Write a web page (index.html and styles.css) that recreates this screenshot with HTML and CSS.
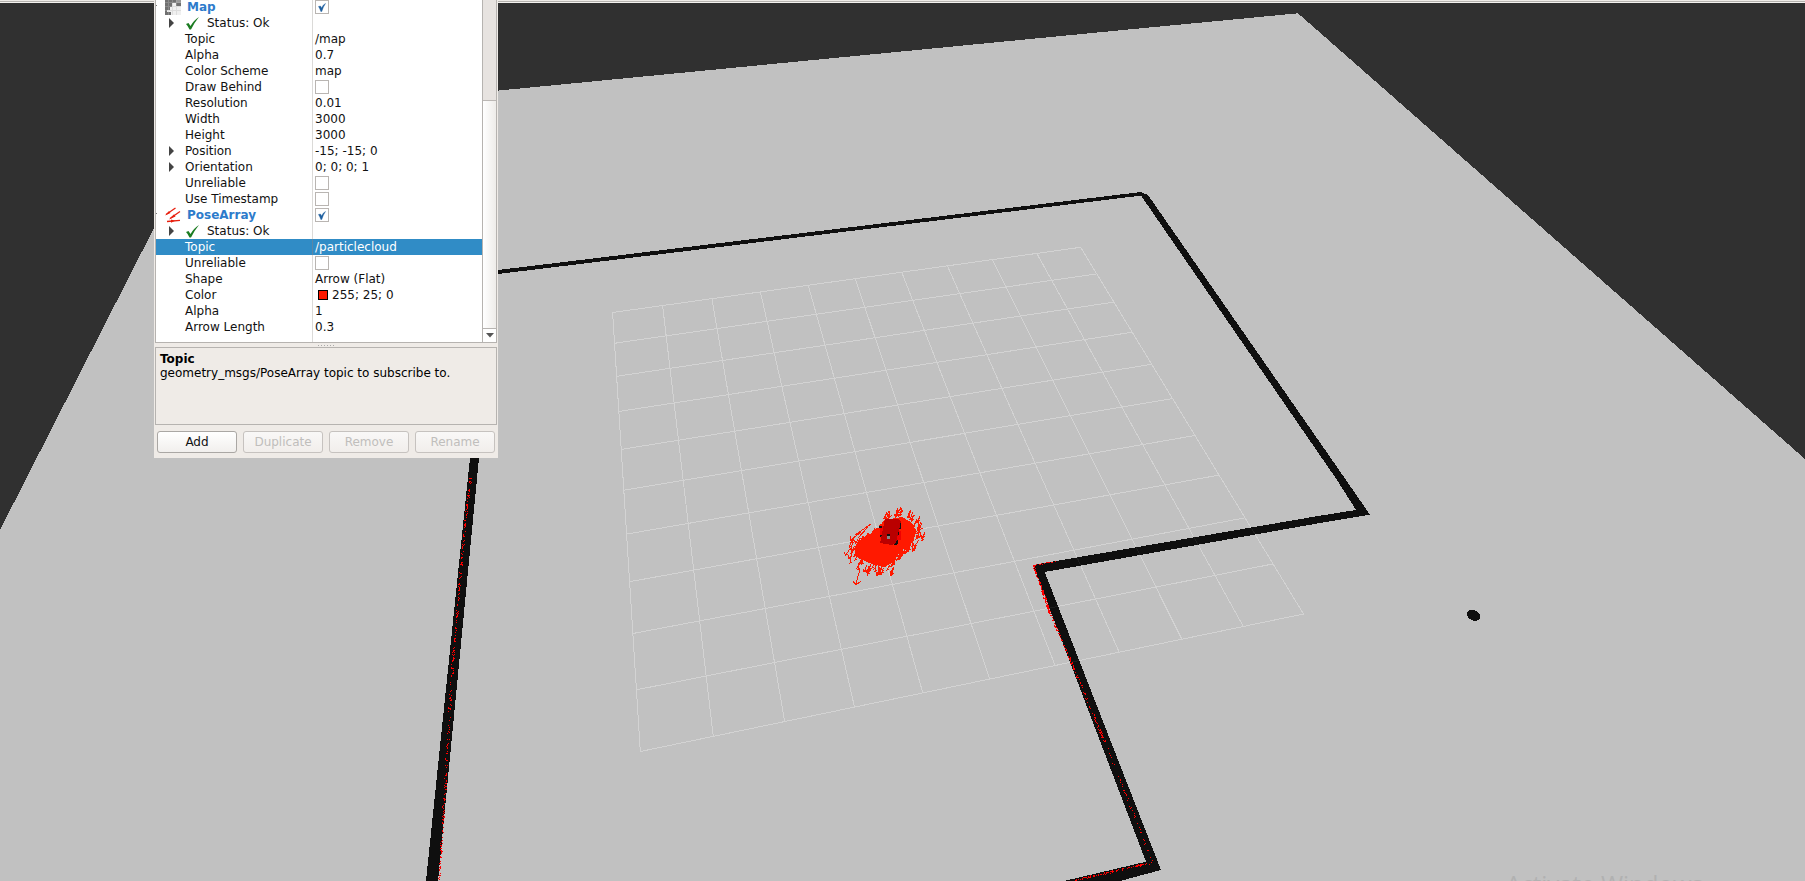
FILE: index.html
```html
<!DOCTYPE html>
<html lang="en">
<head>
<meta charset="utf-8">
<title>RViz</title>
<link rel="stylesheet" href="styles.css">
</head>
<body>
<main class="window">
<svg class="scene" viewBox="0 0 1805 881" width="1805" height="881" shape-rendering="crispEdges">
  <rect width="1805" height="881" fill="#303030"/>
  <path class="ground" d="M0 530 154 228V124L498 90.6 1120 30.3 1298 13.3 1805 459V881H0Z"/>
  <path id="grid" class="grid"/>
  <g class="walls">
    <path d="M498 270 1141 192 1148 195 1346 480 1370 514.700 1320 523 1044.700 572 1161 870 1120 881H1064L1146 861.700 1033 565 1320 515.700 1356 510 1337 480 1141 195.600 498 274Z"/>
    <path d="M470 458H479L438 881H426Z"/>
    <ellipse cx="1473.5" cy="615.3" rx="7.2" ry="5" transform="rotate(25 1473.5 615.3)"/>
  </g>
  <path id="gridOver" class="grid grid-over"/>
  <path id="scan" class="scan"/>
  <path id="cloud" class="cloud"/>
  <path id="arrows" class="arrows"/>
  <g>
    <path fill="#f00000" d="M880 526h4v10h-4zM897 531h4v9h-4z"/>
    <path fill="#111" d="M879 526h3v2h-3zM880 535h2v2h-2zM899 523h2v6h-2zM896 540h2v4h-2zM894 543h3v2h-3zM898 531h1v4h-1z"/>
    <path fill="#ba0000" d="M885 519 898 519 901 521 896 543 892 545 880 543Z"/>
    <path fill="#111" d="M887 534h3v4h-3z"/><path fill="#888" d="M887 536h3v3h-3z"/>
  </g>
</svg>
<div class="watermark">Activate Windows</div>
<div class="topline"></div>
<aside class="panel">
  <div class="tree">
    <div class="rows" id="rows"></div>
    <div class="scrollbar"><div class="thumb"></div><div class="trough"></div><div class="down"><svg width="8" height="5" viewBox="0 0 8 5"><path d="M0 0h8L4 4.5Z" fill="#555"/></svg></div></div>
  </div>
  <div class="splitter"><i></i><i></i><i></i><i></i><i></i><i></i></div>
  <div class="help"><b>Topic</b><span>geometry_msgs/PoseArray topic to subscribe to.</span></div>
  <div class="buttons"><button>Add</button><button disabled>Duplicate</button><button disabled>Remove</button><button disabled>Rename</button></div>
</aside>
</main>
<script src="app.js"></script>
</body>
</html>
```
FILE: styles.css
```css
body { margin: 0; overflow: hidden; font-family: "DejaVu Sans", sans-serif; font-size: 12px; color: #111; }
.window { position: relative; width: 1805px; height: 881px; overflow: hidden; }
.scene { display: block; }
.ground { fill: #c1c1c1; }
.walls { fill: #0f0f0f; }
.grid { fill: none; stroke: #fff; stroke-opacity: .26; }
.grid-over { stroke-opacity: .06; }
.scan { fill: #f00; }
.cloud { fill: #ff1900; }
.arrows { fill: none; stroke: #ff1900; stroke-width: 1; }
.topline { position: absolute; inset: 0 0 auto 0; height: 1px; background: #edeae6; border-bottom: 1px solid #b5b2ae; box-shadow: 0 1px #f3f1ee; }
.watermark { position: absolute; left: 1506px; top: 868px; font: 24px/32px "Open Sans", sans-serif; color: #b1b1b1; white-space: nowrap; }
.panel { position: absolute; left: 154px; top: 0; width: 344px; height: 458px; background: #efebe7; display: flex; flex-direction: column; }
.tree { flex: none; display: flex; height: 342px; margin: 0 1px; border: 1px solid #b6b3b0; border-top: 0; background: #fff; }
.rows { width: 326px; overflow: hidden; display: flex; flex-direction: column; }
.row { display: grid; grid-template-columns: 157px 1fr; height: 16px; flex: none; line-height: 16px; white-space: nowrap; }
.row:first-child { margin-top: -1px; }
.name { display: flex; align-items: center; padding-left: 29px; border-right: 1px solid #dbdad8; height: 16px; }
.group .name { padding-left: 9px; font-weight: bold; color: #2d7bcb; gap: 6px; background: linear-gradient(#777, #777) 0 6px / 1px 1px no-repeat; }
.branch .name, .status .name { padding-left: 13px; }
.triangle { width: 5px; height: 10px; margin-right: 11px; flex: none; }
.status .triangle { margin-right: 12px; }
.check { width: 13px; height: 13px; margin-right: 8px; flex: none; }
.value { display: flex; align-items: center; padding-left: 2px; }
.selected { background: #308cc6; color: #fff; }
.selected .name { border-color: #5c86a5; }
.box { box-sizing: border-box; width: 14px; height: 14px; border: 1px solid #b9b5b2; background: #fff; }
.box svg { display: block; }
.swatch { box-sizing: border-box; width: 10px; height: 10px; margin: 0 4px 0 3px; border: 1px solid #000; background: #ff1900; }
.filler { flex: 1; display: grid; grid-template-columns: 157px 1fr; }
.filler i { border-right: 1px solid #dbdad8; }
.scrollbar { box-sizing: border-box; width: 14px; border-left: 1px solid #b6b3b0; display: flex; flex-direction: column; }
.thumb { height: 100px; background: #e7e3e0; border-bottom: 1px solid #bbb7b4; }
.trough { flex: 1; background: linear-gradient(90deg, #fff, #eeece9); }
.down { height: 13px; border-top: 1px solid #b6b3b0; display: flex; align-items: center; justify-content: center; }
.splitter { flex: none; height: 4px; display: flex; gap: 1px; justify-content: center; align-items: center; }
.splitter i { width: 2px; height: 1px; background: linear-gradient(90deg, #aaa 50%, #efebe7 50%); }
.help { flex: none; box-sizing: border-box; height: 78px; margin: 0 1px; border: 1px solid #b6b3b0; padding: 4px; line-height: 14px; display: flex; flex-direction: column; color: #000; }
.buttons { display: flex; gap: 6px; padding: 6px 3px 0; }
button { box-sizing: border-box; width: 80px; height: 22px; padding: 0; border: 1px solid #aaa7a4; border-radius: 3px; background: linear-gradient(#fff, #f1efed); font: 12px "DejaVu Sans", sans-serif; color: #111; }
button:disabled { color: #c0bebc; border-color: #c6c2bf; background: linear-gradient(#f9f8f7, #f1eeeb); }
```
FILE: app.js
```js
const triangle = '<svg class="triangle" viewBox="0 0 5 10"><path d="M0 0L5 5L0 10Z" fill="#444"/></svg>';
const okIcon = '<svg class="check" viewBox="0 0 13 13"><path d="M0 7L2.500 6L4.500 9Q8 3 13 0Q8 6 5 12.500H3.500Q2 9 0 7Z" fill="#1c7c22"/></svg>';
const mapIcon = '<svg width="16" height="16" shape-rendering="crispEdges"><path fill="#707070" d="M0 0h16v16H0z"/><path fill="#f0f0f0" d="M7 4h4v3h5v9H6v-3H2v-2h3V8h2z"/><path fill="#999" d="M11 1h5v3h-5z"/><path stroke="#bbb" stroke-opacity=".35" d="M3.500 0v16M7.500 0v16M11.500 0v16M0 3.500h16M0 7.500h16M0 11.500h16"/></svg>';
const poseIcon = '<svg width="16" height="16" fill="#e8200f" stroke="#e8200f" stroke-width="1.300"><path d="M1 7.500L10.500 1M5 11.500L15 4.500M2 14.500L15 13.300"/><path stroke="none" d="M0 8.500L4 4L5.500 6ZM4 12.500L9 7.300L10.500 9.500ZM6 12.500L10 13.700L6 15.700Z"/></svg>';
const box = on => `<span class="box">${on ? '<svg width="12" height="12"><path d="M2.500 5.500L4.500 5L5.500 7Q7 3.500 9.500 2.500Q7 6 5.800 10.500H4.800Q3.800 7.500 2.500 5.500Z" fill="#1d5e9e" stroke="#1d5e9e" stroke-width=".4"/></svg>' : ''}</span>`;
const data = [
  ['group', mapIcon + 'Map', box(1)], ['status', triangle + okIcon + 'Status: Ok', ''],
  ['', 'Topic', '/map'], ['', 'Alpha', '0.7'], ['', 'Color Scheme', 'map'], ['', 'Draw Behind', box(0)],
  ['', 'Resolution', '0.01'], ['', 'Width', '3000'], ['', 'Height', '3000'],
  ['branch', triangle + 'Position', '-15; -15; 0'], ['branch', triangle + 'Orientation', '0; 0; 0; 1'],
  ['', 'Unreliable', box(0)], ['', 'Use Timestamp', box(0)],
  ['group', poseIcon + 'PoseArray', box(1)], ['status', triangle + okIcon + 'Status: Ok', ''],
  ['selected', 'Topic', '/particlecloud'], ['', 'Unreliable', box(0)], ['', 'Shape', 'Arrow (Flat)'],
  ['', 'Color', '<span class="swatch"></span>255; 25; 0'], ['', 'Alpha', '1'], ['', 'Arrow Length', '0.3']
];
document.getElementById('rows').innerHTML = data.map(([kind, name, value]) =>
  `<div class="row ${kind}"><div class="name">${name}</div><div class="value">${value}</div></div>`).join('') + '<div class="filler"><i></i></div>';

// Perspective ground grid, 10 x 10 cells, from its four projected corners.
const [p0, p1, p2, p3] = [[612.6, 312.5], [1080.6, 247.3], [1303.5, 614], [640.3, 751.5]];
const dx1 = p1[0] - p2[0], dx2 = p3[0] - p2[0], sx = p0[0] - p1[0] + p2[0] - p3[0];
const dy1 = p1[1] - p2[1], dy2 = p3[1] - p2[1], sy = p0[1] - p1[1] + p2[1] - p3[1];
const det = dx1 * dy2 - dx2 * dy1;
const g = (sx * dy2 - dx2 * sy) / det, h = (dx1 * sy - sx * dy1) / det;
const project = (u, v) => [0, 1].map(i =>
  (((p1[i] - p0[i] + g * p1[i]) * u + (p3[i] - p0[i] + h * p3[i]) * v + p0[i]) / (g * u + h * v + 1)).toFixed(1)).join(' ');
let grid = '';
for (let i = 0; i <= 10; i++) grid += `M${project(i / 10, 0)}L${project(i / 10, 1)}M${project(0, i / 10)}L${project(1, i / 10)}`;
document.getElementById('grid').setAttribute('d', grid);
document.getElementById('gridOver').setAttribute('d', grid);

let seed = 7;
const rnd = () => (seed = (seed * 16807) % 2147483647) / 2147483647;
// Laser returns scattered along the walls: start, end, number of points, spread.
let scan = '';
[[470, 478, 464, 530, 48, 1], [464, 530, 452, 665, 105, 1], [452, 665, 439, 880, 160, 1.2],
 [1033, 565, 1050, 614, 120, 1], [1050, 614, 1074, 669, 75, .8], [1074, 669, 1105, 743, 75, 1],
 [1105, 743, 1152, 861, 42, 1], [1152, 862, 1070, 881, 95, 1.5], [1034, 565, 1059, 560, 15, .5]
].forEach(([x1, y1, x2, y2, n, s]) => {
  for (let i = 0; i < n; i++) {
    const t = rnd();
    scan += `M${Math.round(x1 + (x2 - x1) * t + (rnd() - .5) * 2 * s)} ${Math.round(y1 + (y2 - y1) * t + (rnd() - .5) * s)}h1v1h-1z`;
  }
});
document.getElementById('scan').setAttribute('d', scan);

// Dense core of the particle cloud, with loose pose arrows around its rim.
const rim = [[858, 541], [872, 533], [880, 527], [885, 520], [902, 517], [911, 522], [916, 530], [914, 540],
  [909, 546], [901, 551], [893, 562], [885, 567], [872, 564], [858, 558], [854, 549]];
document.getElementById('cloud').setAttribute('d', 'M' + rim.map(p => p.join(' ')).join('L') + 'Z');
let arrows = 'M860 569L856 584M853 581L856 585L861 581M850 541L861 532M855 535L871 524M858 538L868 527M850 541V536';
rim.forEach(([ax, ay], k) => {
  const [bx, by] = rim[(k + 1) % rim.length];
  const len = Math.hypot(bx - ax, by - ay), nx = (by - ay) / len, ny = (ax - bx) / len;
  const reach = k < 3 ? 0 : (k > 7 && k < 10 ? 1 : 8);
  for (let i = 0; i < len * .6; i++) {
    const t = rnd(), out = rnd() * reach;
    const x = Math.round(ax + (bx - ax) * t + nx * out) + .5, y = Math.round(ay + (by - ay) * t + ny * out) + .5;
    const dx = Math.round(1 + rnd() * 3), dy = Math.round(4 + rnd() * 4);
    arrows += `M${x + dx / 2} ${y - dy / 2}l${-dx} ${dy}` + (rnd() < .4 ? 'l-1 -3m1 3l3 -2' : 'l2 -1');
  }
});
document.getElementById('arrows').setAttribute('d', arrows);
```
